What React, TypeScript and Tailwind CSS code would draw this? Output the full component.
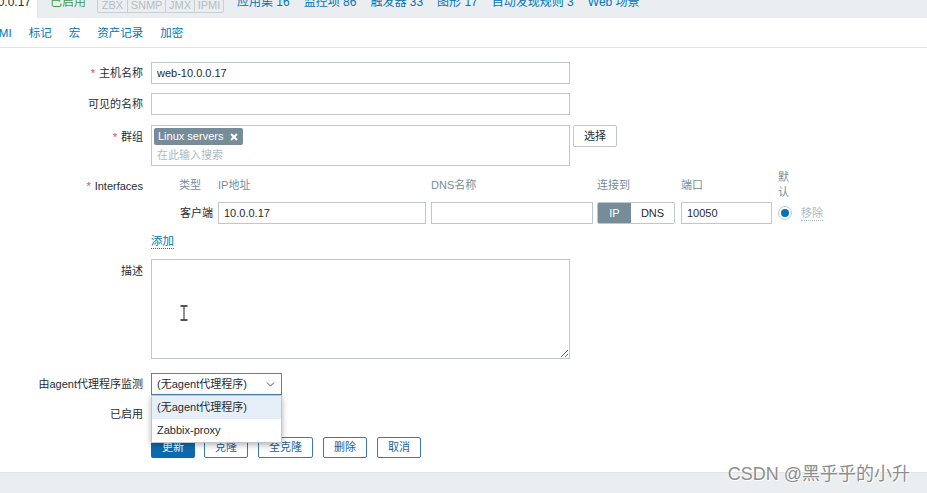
import { ChevronDown } from "lucide-react";

const topLinks = ["应用集 16", "监控项 86", "触发器 33", "图形 17", "自动发现规则 3", "Web 场景"];
const subTabs = ["标记", "宏", "资产记录", "加密"];

function Label({ text, required }: { readonly text: string; readonly required?: boolean }): React.ReactElement {
  return (
    <div className="w-[143px] shrink-0 text-right">
      {required && <span className="mr-[4px] text-[#d64e4e]">*</span>}
      {text}
    </div>
  );
}

function TextBox({ value, width }: { readonly value?: string; readonly width: string }): React.ReactElement {
  return (
    <div className={`flex h-[22px] ${width} items-center border border-[#bfc7cc] bg-white px-[5px]`}>{value}</div>
  );
}

export default function App(): React.ReactElement {
  return (
    <div className="relative flex h-[493px] w-[927px] flex-col overflow-hidden bg-white font-['Liberation_Sans',Arial,'Noto_Sans_CJK_SC',sans-serif] text-[11px] text-[#1f2c33]">
      {/* host tabs strip (cut off at the top) */}
      <div className="flex h-[18px] shrink-0 items-start overflow-hidden bg-[#ebeef0] text-[12px]">
        <div className="h-[18px] w-[38px] shrink-0 overflow-hidden border-r border-[#dfe4e7] bg-white">
          <span className="-mt-[7px] -ml-[19px] block whitespace-nowrap">10.0.0.17</span>
        </div>
        <span className="ml-[12px] -mt-[7px] text-[#429e47]">已启用</span>
        <div className="ml-[11px] -mt-[3px] flex rounded-[2px] border border-[#c8d0d4] text-[11px] leading-[14px] text-[#b3bec4]">
          <span className="w-[29px] text-center">ZBX</span>
          <span className="w-[38px] border-l border-[#c8d0d4] text-center">SNMP</span>
          <span className="w-[29px] border-l border-[#c8d0d4] text-center">JMX</span>
          <span className="w-[29px] border-l border-[#c8d0d4] text-center">IPMI</span>
        </div>
        <div className="ml-[13px] -mt-[7px] flex gap-[14px] whitespace-nowrap text-[#0275b8]">
          {topLinks.map((l) => (
            <span key={l}>{l}</span>
          ))}
        </div>
      </div>

      {/* form tabs */}
      <div className="flex h-[30px] shrink-0 items-center gap-[17px] border-b border-[#dfe4e7] pt-[3px] text-[11.5px] text-[#0275b8]">
        <span className="-ml-[12px]">IPMI</span>
        {subTabs.map((t) => (
          <span key={t}>{t}</span>
        ))}
      </div>

      <div className="flex flex-col">
        <div className="mt-[14px] flex items-center gap-[8px]">
          <Label text="主机名称" required />
          <TextBox value="web-10.0.0.17" width="w-[419px]" />
        </div>

        <div className="mt-[9px] flex items-center gap-[8px]">
          <Label text="可见的名称" />
          <TextBox width="w-[419px]" />
        </div>

        <div className="mt-[10px] flex items-start gap-[8px]">
          <div className="pt-[4px]">
            <Label text="群组" required />
          </div>
          <div className="flex h-[41px] w-[419px] flex-col border border-[#bfc7cc] bg-white px-[2px] pt-[2px]">
            <span className="flex h-[17px] w-[89px] items-center justify-between rounded-[2px] bg-[#768d99] px-[4px] text-white">
              Linux servers
              <svg width="8" height="8" viewBox="0 0 8 8" className="mr-[1px]">
                <path d="M1 1L7 7M7 1L1 7" stroke="white" strokeWidth="2" />
              </svg>
            </span>
            <span className="mt-[2px] pl-[3px] text-[#acbbc2]">在此输入搜索</span>
          </div>
          <button className="-ml-[5px] h-[22px] w-[44px] rounded-[2px] border border-[#bfc7cc] bg-white">选择</button>
        </div>

        {/* interfaces */}
        <div className="mt-[4px] flex items-start gap-[8px]">
          <div className="pt-[8px]">
            <Label text="Interfaces" required />
          </div>
          <div className="flex flex-col pl-[28px]">
            <div className="flex h-[30px] items-center text-[#768d99]">
              <span className="w-[34px]">类型</span>
              <span className="ml-[5px] w-[208px]">IP地址</span>
              <span className="ml-[5px] w-[162px]">DNS名称</span>
              <span className="ml-[4px] w-[78px]">连接到</span>
              <span className="ml-[6px] w-[91px]">端口</span>
              <span className="ml-[6px] w-[14px] leading-[15px]">默认</span>
            </div>
            <div className="mt-[2px] flex items-center">
              <span className="w-[34px] text-right">客户端</span>
              <div className="ml-[5px]">
                <TextBox value="10.0.0.17" width="w-[208px]" />
              </div>
              <div className="ml-[5px]">
                <TextBox width="w-[162px]" />
              </div>
              <div className="ml-[4px] flex h-[22px] w-[78px] overflow-hidden rounded-[2px] border border-[#bfc7cc]">
                <span className="flex w-[33px] items-center justify-center bg-[#768d99] text-white">IP</span>
                <span className="flex flex-1 items-center justify-center bg-white">DNS</span>
              </div>
              <div className="ml-[6px]">
                <TextBox value="10050" width="w-[91px]" />
              </div>
              <span className="ml-[6px] flex h-[14px] w-[14px] items-center justify-center rounded-full border border-[#bfc7cc] bg-white">
                <span className="h-[8px] w-[8px] rounded-full bg-[#0275b8]" />
              </span>
              <span className="ml-[9px] border-b border-dotted border-[#acbbc2] leading-[14px] text-[#acbbc2]">移除</span>
            </div>
          </div>
        </div>

        <div className="mt-[10px] flex gap-[8px]">
          <div className="w-[143px]" />
          <span className="border-b border-dotted border-[#0275b8] text-[11.5px] leading-[14px] text-[#0275b8]">添加</span>
        </div>

        <div className="mt-[10px] flex items-start gap-[8px]">
          <div className="pt-[4px]">
            <Label text="描述" />
          </div>
          <div className="relative">
            <textarea readOnly className="block h-[100px] w-[419px] resize-y border border-[#bfc7cc] bg-white outline-none" />
            <svg width="8" height="16" viewBox="0 0 8 16" className="absolute top-[46px] left-[29px]">
              <path d="M0.5 1H7.5M0.5 15H7.5M4 1V15" stroke="#555" strokeWidth="2" />
              <path d="M4 2V14" stroke="#ccc" strokeWidth="1" />
            </svg>
          </div>
        </div>

        <div className="mt-[14px] flex items-center gap-[8px]">
          <Label text="由agent代理程序监测" />
          <div className="relative">
            <div className="flex h-[22px] w-[131px] items-center justify-between border border-[#4f84b3] bg-white pr-[4px] pl-[5px]">
              (无agent代理程序)
              <ChevronDown size={13} strokeWidth={1.5} />
            </div>
            <div className="absolute top-[22px] left-0 z-10 w-[131px] border border-[#bfc7cc] bg-white shadow-[0_2px_6px_rgba(0,0,0,0.3)]">
              <div className="flex h-[23px] items-center bg-[#e6eff7] px-[5px]">(无agent代理程序)</div>
              <div className="flex h-[23px] items-center px-[5px]">Zabbix-proxy</div>
            </div>
          </div>
        </div>

        <div className="mt-[9px] flex h-[20px] items-center gap-[8px]">
          <Label text="已启用" />
        </div>

        <div className="mt-[13px] flex gap-[9px] pl-[151px]">
          <button className="h-[21px] w-[44px] rounded-[2px] bg-[#0b6aae] text-white">更新</button>
          <button className="h-[21px] w-[44px] rounded-[2px] border border-[#3d79ad] bg-white text-[#1f5f95]">克隆</button>
          <button className="ml-[1px] h-[21px] w-[55px] rounded-[2px] border border-[#3d79ad] bg-white text-[#1f5f95]">全克隆</button>
          <button className="ml-[1px] h-[21px] w-[44px] rounded-[2px] border border-[#3d79ad] bg-white text-[#1f5f95]">删除</button>
          <button className="ml-[1px] h-[21px] w-[44px] rounded-[2px] border border-[#3d79ad] bg-white text-[#1f5f95]">取消</button>
        </div>
      </div>

      <div className="mt-[14px] flex-1 border-t border-[#dfe4e7] bg-[#ebeef0]" />

      <span className="absolute right-[17px] bottom-[5px] text-[18px] text-[#8e8e8e] [text-shadow:0_0_2px_#fff,1px_1px_1px_#fff]">
        CSDN @黑乎乎的小升
      </span>
    </div>
  );
}
